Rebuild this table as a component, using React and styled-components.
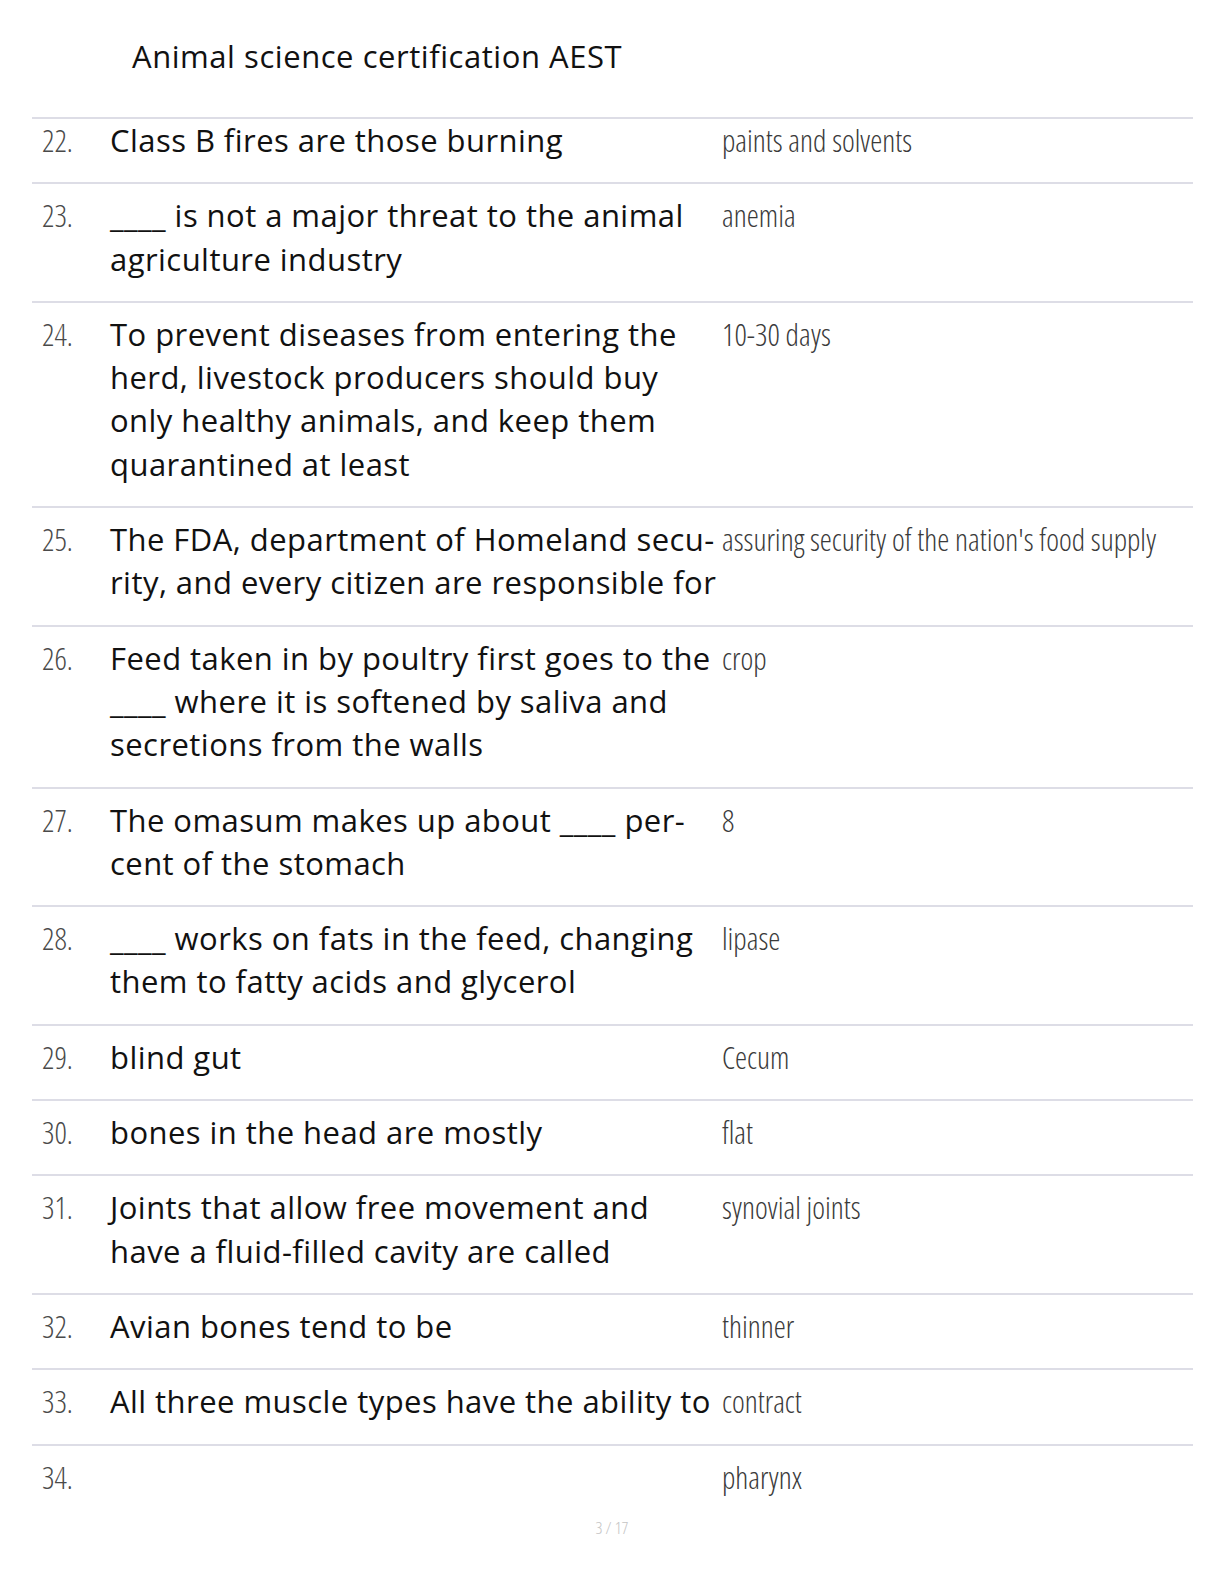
import styled, { createGlobalStyle } from "styled-components"

const GlobalStyle = createGlobalStyle`
  html, body {
    margin: 0;
    padding: 0;
    background: #ffffff;
  }
  body {
    font-family: "Open Sans", "Noto Sans", "Liberation Sans", sans-serif;
    color: #111111;
  }
`

const items = [
  { n: 22, q: ["Class B fires are those burning"], a: "paints and solvents" },
  { n: 23, q: ["____ is not a major threat to the animal", "agriculture industry"], a: "anemia" },
  {
    n: 24,
    q: [
      "To prevent diseases from entering the",
      "herd, livestock producers should buy",
      "only healthy animals, and keep them",
      "quarantined at least",
    ],
    a: "10-30 days",
  },
  {
    n: 25,
    q: ["The FDA, department of Homeland secu-", "rity, and every citizen are responsible for"],
    a: "assuring security of the nation's food supply",
  },
  {
    n: 26,
    q: ["Feed taken in by poultry first goes to the", "____ where it is softened by saliva and", "secretions from the walls"],
    a: "crop",
  },
  { n: 27, q: ["The omasum makes up about ____ per-", "cent of the stomach"], a: "8" },
  { n: 28, q: ["____ works on fats in the feed, changing", "them to fatty acids and glycerol"], a: "lipase" },
  { n: 29, q: ["blind gut"], a: "Cecum" },
  { n: 30, q: ["bones in the head are mostly"], a: "flat" },
  { n: 31, q: ["Joints that allow free movement and", "have a fluid-filled cavity are called"], a: "synovial joints" },
  { n: 32, q: ["Avian bones tend to be"], a: "thinner" },
  { n: 33, q: ["All three muscle types have the ability to"], a: "contract" },
  { n: 34, q: [], a: "pharynx" },
]

export default function App() {
  return (
    <Page>
      <GlobalStyle />
      <Title>Animal science certification AEST</Title>
      <Table>
        {items.map((item, i) => (
          <Row key={item.n} $first={i === 0}>
            <Num>{item.n}.</Num>
            <Question>
              {item.q.map((line, j) => (
                <Line key={j}>{line}</Line>
              ))}
            </Question>
            <Answer>{item.a}</Answer>
          </Row>
        ))}
      </Table>
      <PageNum>3 / 17</PageNum>
    </Page>
  )
}

const Page = styled.div`
width: 1224px;
min-height: 1584px;
box-sizing: border-box;
padding-top: 36px;
`

const Title = styled.h1`
margin: 0 0 41px 132px;
font-size: 31px;
letter-spacing: 0.55px;
line-height: 40px;
font-weight: 400;
color: #111;
`

const Table = styled.div`
margin: 0 31px 0 32px;
`

const Row = styled.div`
display: grid;
grid-template-columns: 68px 612px 1fr;
border-top: 2px solid #dddde6;
padding: ${props => props.$first ? '0' : '10px'} 0 20px 10px;
line-height: 43.3px;
min-height: 43px;
`

const Condensed = styled.span`
font-family: "Open Sans", "Noto Sans", sans-serif;
font-weight: 300;
font-stretch: 75%;
font-size: 30.5px;
color: #3a3a3a;
white-space: nowrap;
`

const Num = styled(Condensed)`
color: #4a4a4a;
`

const Answer = styled(Condensed)``

const Question = styled.div`
font-size: 31px;
letter-spacing: 0.45px;
color: #111;
`

const Line = styled.div`
white-space: nowrap;
`

const PageNum = styled.div`
text-align: center;
font-size: 17px;
font-weight: 300;
font-stretch: 75%;
color: #c4c4c4;
margin-top: -3px;
`
